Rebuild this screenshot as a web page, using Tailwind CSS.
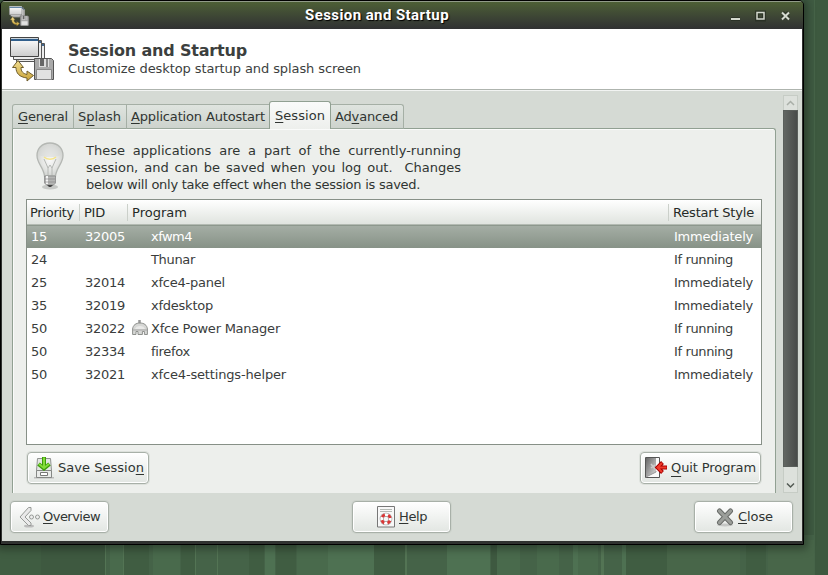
<!DOCTYPE html>
<html lang="en">
<head>
<meta charset="utf-8">
<title>Session and Startup</title>
<script src="https://cdn.jsdelivr.net/npm/@tailwindcss/browser@4"></script>
</head>
<body class="w-[828px] h-[575px] overflow-hidden bg-[#456348] text-[13px] leading-[17px] text-[#303532] font-['DejaVu_Sans',sans-serif] whitespace-nowrap">
<svg class="absolute w-0 h-0">
  <defs>
    <linearGradient id="paper" x2="0" y2="1"><stop stop-color="#fff"/><stop offset="1" stop-color="#ccc"/></linearGradient>
    <linearGradient id="gold" x2="0" y2="1"><stop stop-color="#f3df90"/><stop offset="1" stop-color="#c8a238"/></linearGradient>
    <linearGradient id="door" x2="1" y2="1"><stop stop-color="#666"/><stop offset="1" stop-color="#ddd"/></linearGradient>
    <radialGradient id="glass"><stop stop-color="#fafafa"/><stop offset=".65" stop-color="#e4e5e3"/><stop offset="1" stop-color="#d2d4d1"/></radialGradient>
  </defs>
  <symbol id="session" viewBox="0 0 46 46">
    <path d="M6.500 6.500h28v18h-28z" fill="#ececec" stroke="#555"/><path d="M7 7h27v2H7z" fill="#426990"/>
    <path d="M3.500 3.500h28v19h-28z" fill="#ececec" stroke="#555"/><path d="M4 4h27v2H4z" fill="#426990"/>
    <path d="M.500.500h28v19h-28z" fill="url(#paper)" stroke="#444"/><path d="M1 1h27v1H1z" fill="#ccd5dc"/><path d="M1 2h27v2H1z" fill="#315f8c"/>
    <path d="M8 23.500l5.500 7h-2.500c0 4 2 6 6 7v-3.500l6.500 4.500-6.500 5.500v-3c-8-1-11-5-11-10.500H2.500z" fill="url(#gold)" stroke="#6f5d2c"/>
    <path d="M24.500 21.500h17l2 2v19h-19z" fill="#a9a9a9" stroke="#555"/>
    <path d="M29 22h10v8H29z" fill="#ddd"/><path d="M30 22h4v7h-4z" fill="#666"/><path d="M36 22h2v8h-2z" fill="#888"/>
    <path d="M26.500 32.500h15v10h-15z" fill="#e1e1e1" stroke="#888"/>
  </symbol>
</svg>

<div class="relative w-[828px] h-[575px]">
  <!-- wallpaper stripes -->
  <svg class="absolute inset-0" width="828" height="575">
    <path fill="#405d42" d="M0 540h41v35H0zM124 540h25v35h-25zM181 540h14v35h-14zM249 540h15v35h-15zM276 540h20v35h-20zM374 540h31v35h-31zM626 540h41v35h-41zM746 540h20v35h-20z"/>
    <path fill="#3e5940" d="M41 540h53v35H41zM94 540h11v35H94zM491 540h6v35h-6z"/>
    <path fill="#496a4c" d="M110 540h13v35h-13zM153 540h27v35h-27zM297 540h31v35h-31zM497 540h23v35h-23zM537 540h22v35h-22zM578 540h20v35h-20z"/>
    <path fill="#4e7152" d="M265 540h10v35h-10zM328 540h46v35h-46zM447 540h43v35h-43zM573 540h5v35h-5zM622 540h4v35h-4z"/>
    <path fill="#486649" d="M667 540h73v35h-73zM768 540h46v35h-46z"/>
    <path fill="#537454" d="M105 540h1v35h-1zM123 540h1v35h-1zM195 540h1v35h-1zM217 540h1v35h-1zM405 540h2v35h-2zM601 540h3v35h-3z"/>
    <path fill="#3f5b42" d="M804 0h10v535h-10z"/><path fill="#3d593f" d="M815 0h13v575h-13z"/><path fill="#466448" d="M814 0h1v575h-1z"/>
  </svg>

  <main class="relative w-[804px] h-[545px] flex flex-col bg-[#303230] border border-black rounded-t-[5px] overflow-hidden shadow-[0_1px_9px_3px_rgba(0,0,0,0.35)]">
    <header class="h-[28px] shrink-0 flex items-center border-t border-[#909a88] bg-linear-to-b from-[#4d5f35] to-[#303132] pl-[8px] pr-[6px]">
      <svg class="w-[21px] h-[21px] mt-[1px]" viewBox="0 0 46 46"><use href="#session"/></svg>
      <h1 class="flex-1 pl-[275px] font-['Roboto',sans-serif] font-bold text-[15px] text-white [text-shadow:1px_1px_1px_#000]"><span data-w="144" class="inline-block">Session and Startup</span></h1>
      <svg width="62" height="14" viewBox="0 0 62 14" class="mr-[5px]" fill="none">
        <path d="M1 10h9M27 3.500h7v7h-7zM52.500 3.500l6 6m0-6l-6 6" stroke="#22281e" stroke-opacity=".6" stroke-width="4"/>
        <path d="M1 10h9" stroke="#d4d9cf" stroke-width="2"/><path d="M27 3.500h7v6.500h-7z" stroke="#d4d9cf" stroke-width="1.500"/><path d="M52 3.500l7 7m0-7l-7 7" stroke="#d4d9cf" stroke-width="2"/>
      </svg>
    </header>

    <section class="mx-px h-[61px] shrink-0 bg-white border-b border-[#aeb4ae] flex pl-[8px] pt-[8px]">
      <svg class="w-[46px] h-[46px] shrink-0" viewBox="0 0 46 46"><use href="#session"/></svg>
      <div class="pl-[12px] pt-[4px] text-[#3c3f3e]">
        <h2 class="font-bold text-[16px] leading-[20px]"><span data-w="179" class="inline-block">Session and Startup</span></h2>
        <p class="-mt-px"><span data-w="293" class="inline-block">Customize desktop startup and splash screen</span></p>
      </div>
    </section>

    <div class="mx-px h-[451px] shrink-0 bg-[#d5dad4] border-t border-[#f2f4f2] flex flex-col">
      <div class="h-[402px] flex">
        <div class="w-[764px] ml-[10px] pt-[10px] flex flex-col">
          <nav class="flex items-end h-[28px] -mb-px relative">
            <div class="w-[62px] h-[25px] border border-[#a5afa5] border-b-[#9aa79b] rounded-tl-[3px] bg-linear-to-b from-[#dfe4df] to-[#cdd3cd] pl-[5px] pt-[3px]"><span data-w="50" class="inline-block"><u class="underline-offset-2">G</u>eneral</span></div>
            <div class="w-[53px] h-[25px] border border-l-0 border-[#a5afa5] border-b-[#9aa79b] bg-linear-to-b from-[#dfe4df] to-[#cdd3cd] pl-[4px] pt-[3px]"><span data-w="43" class="inline-block">S<u class="underline-offset-4 [text-decoration-skip-ink:none]">p</u>lash</span></div>
            <div class="w-[142px] h-[25px] border border-x-0 border-[#a5afa5] border-b-[#9aa79b] bg-linear-to-b from-[#dfe4df] to-[#cdd3cd] pl-[4px] pt-[3px]"><span data-w="134" class="inline-block"><u class="underline-offset-2">A</u>pplication Autostart</span></div>
            <div class="w-[62px] h-[28px] border border-b-0 border-[#91a092] rounded-t-[3px] bg-linear-to-b from-[#fafbfa] to-[#edefec] pl-[5px] pt-[5px]"><span data-w="50" class="inline-block"><u class="underline-offset-2">S</u>ession</span></div>
            <div class="w-[73px] h-[25px] border border-l-0 border-[#a5afa5] border-b-[#9aa79b] rounded-tr-[3px] bg-linear-to-b from-[#dfe4df] to-[#cdd3cd] pl-[4px] pt-[3px]"><span data-w="63" class="inline-block">Ad<u class="underline-offset-2">v</u>anced</span></div>
          </nav>
          <div class="flex-1 border border-b-0 border-[#91a092] rounded-tr-[3px] bg-[#edefec] shadow-[inset_1px_1px_0_#fafbfa] px-[13px]">
            <div class="h-[70px] flex pt-[11px]">
              <svg class="ml-[7px] mt-[1px]" width="34" height="50" viewBox="0 0 34 50">
                <ellipse cx="17" cy="46" rx="8" ry="2.500" fill="#c6c8c5"/>
                <path d="M17 2C8.500 2 4 8 4 14.500c0 8 6.500 11.500 7.500 20.500h11c1-9 7.500-12.500 7.500-20.500C30 8 25.500 2 17 2z" fill="url(#glass)" stroke="#b4b7b3" stroke-width="1.300"/>
                <path d="M17 4C10 4 6 8.500 6 14c7 3 15 3 22 0C28 8.500 24 4 17 4z" fill="#d6d8d5" opacity=".5"/>
                <path d="M11 18l4 9v8m8-17l-4 9v8m-4-8l2-3 2 3" fill="none" stroke="#b5b8b4"/>
                <path d="M11 16c3 3 9 3 12 0" fill="none" stroke="#f4e48b" stroke-width="1.500"/>
                <path d="M11.500 35h11v7l-2 2h-7l-2-2z" fill="#b5b6b4" stroke="#888" stroke-width=".8"/><path d="M14 35v8" stroke="#f4f4f4" stroke-width="2"/><path d="M12 38h10m-10 3h10" stroke="#888" stroke-width=".7"/><path d="M14 44h6l-2 2h-2z" fill="#444"/>
              </svg>
              <div class="ml-[19px] pt-[2px] w-[376px]">
                <p data-w="375" data-by="word"><span class="inline-block">These applications are a part of the currently-running</span></p>
                <p data-w="375" data-by="word"><span class="inline-block">session, and can be saved when you log out.&nbsp; Changes</span></p>
                <p><span data-w="334" class="inline-block">below will only take effect when the session is saved.</span></p>
              </div>
            </div>
            <div class="h-[246px] w-[736px] border border-[#879087] bg-white text-[#3a3d3c]">
              <div class="flex h-[25px] items-center bg-linear-to-b from-white to-[#e0e4df] border-b border-[#b3bab2] text-[#252a27]">
                <div class="w-[53px] h-[17px] pl-[3px] border-r border-[#cbd0ca]"><span data-w="44" class="inline-block">Priority</span></div>
                <div class="w-[48px] h-[17px] pl-[4px] border-r border-[#cbd0ca]"><span data-w="21" class="inline-block">PID</span></div>
                <div class="w-[541px] h-[17px] pl-[4px] border-r border-[#cbd0ca]"><span data-w="55" class="inline-block">Program</span></div>
                <div class="h-[17px] pl-[4px]"><span data-w="81" class="inline-block">Restart Style</span></div>
              </div>
              <div class="flex h-[23px] items-center bg-linear-to-b from-[#a6afa6] to-[#879287] shadow-[inset_0_1px_0_#8d988d] text-white"><div class="w-[58px] pl-[4px]"><span data-w="16" class="inline-block">15</span></div><div class="w-[66px]"><span data-w="40" class="inline-block">32005</span></div><div class="w-[523px]"><span data-w="41" class="inline-block">xfwm4</span></div><span data-w="79" class="inline-block">Immediately</span></div>
              <div class="flex h-[23px] items-center"><div class="w-[58px] pl-[4px]"><span data-w="16" class="inline-block">24</span></div><div class="w-[66px]"></div><div class="w-[523px]"><span data-w="44" class="inline-block">Thunar</span></div><span data-w="59" class="inline-block">If running</span></div>
              <div class="flex h-[23px] items-center"><div class="w-[58px] pl-[4px]"><span data-w="16" class="inline-block">25</span></div><div class="w-[66px]"><span data-w="40" class="inline-block">32014</span></div><div class="w-[523px]"><span data-w="74" class="inline-block">xfce4-panel</span></div><span data-w="79" class="inline-block">Immediately</span></div>
              <div class="flex h-[23px] items-center"><div class="w-[58px] pl-[4px]"><span data-w="16" class="inline-block">35</span></div><div class="w-[66px]"><span data-w="40" class="inline-block">32019</span></div><div class="w-[523px]"><span data-w="62" class="inline-block">xfdesktop</span></div><span data-w="79" class="inline-block">Immediately</span></div>
              <div class="flex h-[23px] items-center"><div class="w-[58px] pl-[4px]"><span data-w="16" class="inline-block">50</span></div><div class="w-[66px] flex items-center"><span data-w="40" class="inline-block">32022</span>
                <svg class="ml-[7px] -mt-[2px] shrink-0" width="16" height="17" viewBox="0 0 16 17"><path d="M7.500 1v4" stroke="#999" stroke-width="2.500"/><path d="M.600 15.500V10C1 6 4 4 8 4s7 2 7.400 6v5.500h-3v-3h-2v3H6v-3H4v3z" fill="#d6d7d5" stroke="#8e908d"/><path d="M3 10c1-4 9-4 10 0z" fill="#e9e9e8"/><path d="M1 11h14" stroke="#a5a5a5"/></svg>
              </div><div class="w-[523px]"><span data-w="129" class="inline-block">Xfce Power Manager</span></div><span data-w="59" class="inline-block">If running</span></div>
              <div class="flex h-[23px] items-center"><div class="w-[58px] pl-[4px]"><span data-w="16" class="inline-block">50</span></div><div class="w-[66px]"><span data-w="40" class="inline-block">32334</span></div><div class="w-[523px]"><span data-w="39" class="inline-block">firefox</span></div><span data-w="59" class="inline-block">If running</span></div>
              <div class="flex h-[23px] items-center"><div class="w-[58px] pl-[4px]"><span data-w="16" class="inline-block">50</span></div><div class="w-[66px]"><span data-w="40" class="inline-block">32021</span></div><div class="w-[523px]"><span data-w="135" class="inline-block">xfce4-settings-helper</span></div><span data-w="79" class="inline-block">Immediately</span></div>
            </div>
            <div class="flex justify-between pt-[7px] pl-[1px]">
              <button class="w-[122px] h-[32px] rounded-[4px] border border-[#a8b0a8] bg-linear-to-b from-white to-[#e2e6e2] shadow-[0_0_0_1px_#dde1dc,inset_0_0_0_1px_#fff] flex items-center pl-[6px]">
                <svg class="shrink-0" width="20" height="24" viewBox="0 0 20 24"><path d="M0 21h20v1.500H0z" fill="#bbb"/><path d="M3.500 2.500h13l1 12v7H2.500v-7z" fill="#e3e6e3" stroke="#909390"/><path d="M2.500 14.500h15v7h-15z" fill="#e9ebe9" stroke="#858885"/><path d="M6.500 16.500h7v3h-7z" fill="#fff" stroke="#777"/><path d="M10 1v10M4.500 8l5.500 4.500L15.500 8" fill="none" stroke="#3d9b0c" stroke-width="4"/><path d="M10 1.500v10M5 8l5 4 5-4" fill="none" stroke="#82dc38" stroke-width="2"/></svg>
                <span data-w="86" class="inline-block ml-[4px] -mt-px">Save Sessio<u class="underline-offset-2">n</u></span>
              </button>
              <button class="w-[121px] h-[32px] mr-[1px] rounded-[4px] border border-[#a8b0a8] bg-linear-to-b from-white to-[#e2e6e2] shadow-[0_0_0_1px_#dde1dc,inset_0_0_0_1px_#fff] flex items-center pl-[4px]">
                <svg class="shrink-0" width="23" height="24" viewBox="0 0 23 24"><path d="M.500 1.500h14v20H.500z" fill="#fafafa" stroke="#555"/><path d="M1 2h10v14L1 21z" fill="url(#door)"/><path d="M1 21l10-5v-1" fill="none" stroke="#999"/><path d="M6 8l4 5m0-4l-4 3" stroke="#ccc" stroke-width="1.500"/><path d="M22 11.500h-8M17.500 6.500l-5 5 5 5" fill="none" stroke="#a80000" stroke-width="4"/><path d="M21.500 11.500h-8M17 7l-4.500 4.500 4.500 4.500" fill="none" stroke="#f03a2c" stroke-width="2"/></svg>
                <span data-w="85" class="inline-block ml-[3px] -mt-px"><u class="underline-offset-4 [text-decoration-skip-ink:none]">Q</u>uit Program</span>
              </button>
            </div>
          </div>
        </div>
        <div class="ml-[7px] mt-[4px] w-[15px] h-[398px] border border-[#c6ccc5] bg-[#dde1dc] flex flex-col">
          <svg width="13" height="14" viewBox="0 0 13 14"><path d="M3 9l3.500-3.500L10 9" fill="none" stroke="#a9afa8" stroke-width="1.500"/></svg>
          <div class="-mx-px h-[357px] border border-[#5a5f5b] bg-linear-to-r from-[#626662] to-[#484b49]"></div>
          <svg width="13" height="25" viewBox="0 0 13 25"><path d="M3 16.500l3.500 3.500L10 16.500" fill="none" stroke="#525a53" stroke-width="1.500"/></svg>
        </div>
      </div>
      <footer class="flex justify-between px-[8px] pr-[9px] pt-[8px]">
        <button class="w-[99px] h-[32px] rounded-[4px] border border-[#a8b0a8] bg-linear-to-b from-white to-[#e2e6e2] shadow-[0_0_0_1px_#cdd3cc,inset_0_0_0_1px_#fff] flex items-center pl-[8px]">
          <svg class="shrink-0" width="22" height="22" viewBox="0 0 22 22"><ellipse cx="10" cy="20" rx="5" ry="1.500" fill="#bbb"/><path d="M9.500 1.500H12v3L6 11l6 6v2.500H9.500L1 11z" fill="#e9e9e9" stroke="#979a97"/><g fill="#eee" stroke="#979a97"><circle cx="12.500" cy="11" r="2"/><circle cx="18.500" cy="11" r="2"/></g></svg>
          <span data-w="57" class="inline-block ml-[2px] -mt-px"><u class="underline-offset-2">O</u>verview</span>
        </button>
        <button class="w-[99px] h-[32px] rounded-[4px] border border-[#a8b0a8] bg-linear-to-b from-white to-[#e2e6e2] shadow-[0_0_0_1px_#cdd3cc,inset_0_0_0_1px_#fff] flex items-center pl-[24px]">
          <svg class="shrink-0" width="18" height="22" viewBox="0 0 18 22"><path d="M.500.500h17v20.500H.500z" fill="#f8f8f8" stroke="#777"/><path d="M3 3.500h12M3 5.500h12" stroke="#b5bab5"/><circle cx="9" cy="13" r="4.300" fill="none" stroke="#999" stroke-width="4"/><circle cx="9" cy="13" r="4.300" fill="none" stroke="#fff" stroke-width="2.800"/><circle cx="9" cy="13" r="4.300" fill="none" stroke="#d93636" stroke-width="2.800" stroke-dasharray="3.380" stroke-dashoffset="-1.690"/></svg>
          <span data-w="28" class="inline-block ml-[4px] -mt-px"><u class="underline-offset-2">H</u>elp</span>
        </button>
        <button class="w-[99px] h-[32px] rounded-[4px] border border-[#a8b0a8] bg-linear-to-b from-white to-[#e2e6e2] shadow-[0_0_0_1px_#cdd3cc,inset_0_0_0_1px_#fff] flex items-center pl-[21px]">
          <svg class="shrink-0" width="18" height="20" viewBox="0 0 18 20"><ellipse cx="9" cy="18" rx="8" ry="1.500" fill="#c5c7c5"/><path d="M3.500 4l11 11.500m0-11.500l-11 11.500" stroke="#666966" stroke-width="5" stroke-linecap="round"/><path d="M3.500 4l11 11.500m0-11.500l-11 11.500" stroke="#9b9e9a" stroke-width="3.200" stroke-linecap="round"/></svg>
          <span data-w="35" class="inline-block ml-[4px] -mt-px"><u class="underline-offset-2">C</u>lose</span>
        </button>
      </footer>
    </div>
  </main>
</div>
<script>
  function fitLabels() {
    for (const el of document.querySelectorAll('[data-w]')) {
      const byWord = el.dataset.by === 'word';
      const run = byWord ? el.firstElementChild : el;
      run.style.letterSpacing = run.style.wordSpacing = '';
      const spare = el.dataset.w - run.getBoundingClientRect().width;
      if (byWord) run.style.wordSpacing = spare / (run.textContent.match(/\s/g).length) + 'px';
      else run.style.letterSpacing = spare / run.textContent.length + 'px';
    }
  }
  window.addEventListener('load', fitLabels);
</script>
</body>
</html>
